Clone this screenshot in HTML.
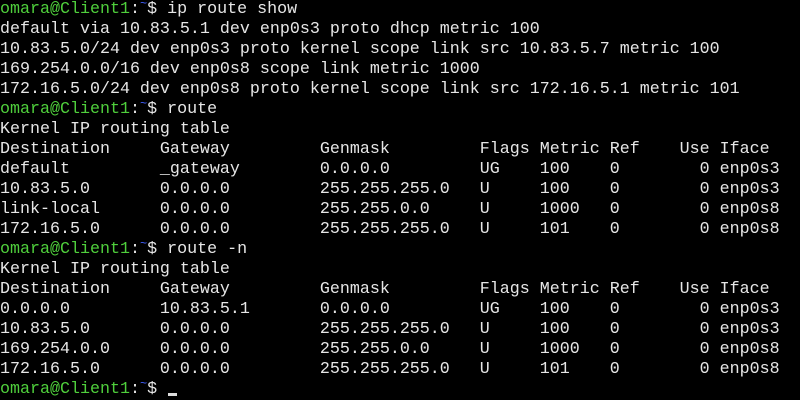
<!DOCTYPE html>
<html><head><meta charset="utf-8"><style>
html,body{margin:0;padding:0;background:#000;width:800px;height:400px;overflow:hidden}
pre{margin:0;padding:0;font-family:"Liberation Mono",monospace;font-size:16.67px;line-height:20px;color:#e6e6e6;white-space:pre}
.g{color:#4fcf3c}.b{color:#4060ff;position:relative;top:-6px;font-size:12px}
.c{display:inline-block;width:9px;height:3px;background:#ddd;vertical-align:-3px;margin-left:11px}
</style></head><body><pre><span class="g">omara@Client1</span>:<span class="b">~</span>$ ip route show
default via 10.83.5.1 dev enp0s3 proto dhcp metric 100
10.83.5.0/24 dev enp0s3 proto kernel scope link src 10.83.5.7 metric 100
169.254.0.0/16 dev enp0s8 scope link metric 1000
172.16.5.0/24 dev enp0s8 proto kernel scope link src 172.16.5.1 metric 101
<span class="g">omara@Client1</span>:<span class="b">~</span>$ route
Kernel IP routing table
Destination     Gateway         Genmask         Flags Metric Ref    Use Iface
default         _gateway        0.0.0.0         UG    100    0        0 enp0s3
10.83.5.0       0.0.0.0         255.255.255.0   U     100    0        0 enp0s3
link-local      0.0.0.0         255.255.0.0     U     1000   0        0 enp0s8
172.16.5.0      0.0.0.0         255.255.255.0   U     101    0        0 enp0s8
<span class="g">omara@Client1</span>:<span class="b">~</span>$ route -n
Kernel IP routing table
Destination     Gateway         Genmask         Flags Metric Ref    Use Iface
0.0.0.0         10.83.5.1       0.0.0.0         UG    100    0        0 enp0s3
10.83.5.0       0.0.0.0         255.255.255.0   U     100    0        0 enp0s3
169.254.0.0     0.0.0.0         255.255.0.0     U     1000   0        0 enp0s8
172.16.5.0      0.0.0.0         255.255.255.0   U     101    0        0 enp0s8
<span class="g">omara@Client1</span>:<span class="b">~</span>$<span class="c"></span></pre></body></html>
